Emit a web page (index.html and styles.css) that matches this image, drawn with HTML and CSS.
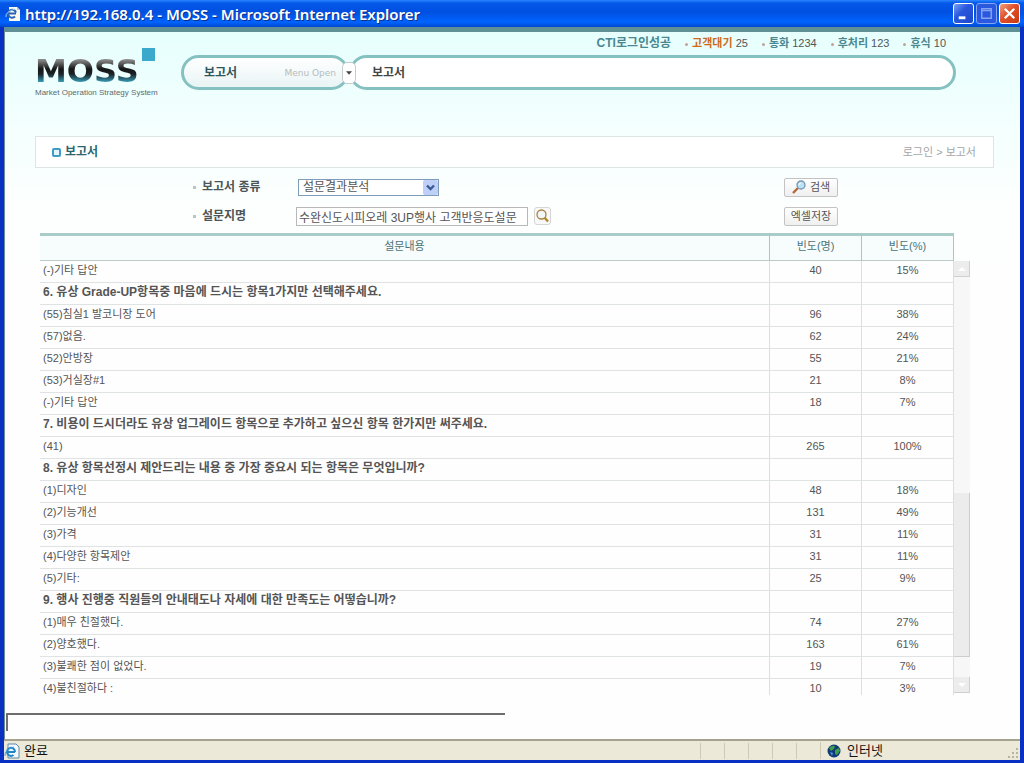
FILE: index.html
```html
<!DOCTYPE html>
<html lang="ko">
<head>
<meta charset="utf-8">
<title>MOSS</title>
<link rel="stylesheet" href="styles.css">
</head>
<body>
<div class="window">
  <header class="titlebar">
    <svg class="page-icon" viewBox="0 0 16 16" aria-hidden="true"><path d="M4 1h8l3 3v11H4z" fill="#fbfaf0"/><path d="M12 1v3h3z" fill="#b9c3d4"/><path d="M11 6.500a4 4 0 1 0-1 4M3.500 7.500H11" fill="none" stroke="#2a63b5" stroke-width="2"/><path d="M1 11Q0 6 10 3" fill="none" stroke="#9fd0f4"/></svg>
    <h1 class="window-title">http://192.168.0.4 - MOSS - Microsoft Internet Explorer</h1>
    <div class="window-buttons">
      <button class="win-btn" aria-label="최소화"><svg viewBox="0 0 20 20"><path d="M5 13h7v3H5z" fill="#fff"/></svg></button>
      <button class="win-btn win-btn-off" aria-label="최대화" disabled><svg viewBox="0 0 20 20"><path d="M5 5h10v10H5zM5 7h10" fill="none" stroke="#86a4f2" stroke-width="1.500"/></svg></button>
      <button class="win-btn win-btn-close" aria-label="닫기"><svg viewBox="0 0 20 20"><path d="M5 5l10 10M15 5l-10 10" stroke="#fff" stroke-width="2.400"/></svg></button>
    </div>
  </header>

  <main class="page">
    <div class="masthead">
      <a class="logo" href="#">
        <span class="logo-word">MOSS</span>
        <span class="logo-square"></span>
        <span class="logo-sub">Market Operation Strategy System</span>
      </a>
      <div class="masthead-main">
        <ul class="call-status">
          <li class="cti">CTI로그인성공</li>
          <li class="dot waiting"><b>고객대기</b> 25</li>
          <li class="dot"><b>통화</b> 1234</li>
          <li class="dot"><b>후처리</b> 123</li>
          <li class="dot"><b>휴식</b> 10</li>
        </ul>
        <nav class="nav">
          <div class="pill pill-menu"><b>보고서</b><span class="menu-open">Menu Open</span></div>
          <button class="menu-toggle" aria-label="Menu Open"><svg viewBox="0 0 7 4"><path d="M0 0h7L3.500 4z" fill="#444"/></svg></button>
          <div class="pill pill-path"><a href="#">보고서</a></div>
        </nav>
      </div>
    </div>

    <div class="section-bar">
      <h2 class="section-title">보고서</h2>
      <span class="breadcrumb">로그인 &gt; 보고서</span>
    </div>

    <form class="filters">
      <label class="filter-label" for="kind">보고서 종류</label>
      <div class="filter-field">
        <span class="select-box">
          <select id="kind"><option>설문결과분석</option></select>
          <svg class="select-arrow" viewBox="0 0 15 15" aria-hidden="true"><rect width="15" height="15" rx="2" fill="#bfd0f8"/><path d="M4 5.500l3.500 3.500L11 5.500" fill="none" stroke="#3b5a96" stroke-width="2.400"/></svg>
        </span>
      </div>
      <div><button class="btn" type="button"><svg class="btn-icon" viewBox="0 0 14 14" aria-hidden="true"><path d="M6 8l-5 5" stroke="#b5683c" stroke-width="2.400"/><circle cx="9" cy="5" r="4" fill="#b9e2f4" stroke="#7895b0" stroke-width="1.300"/><path d="M7 5q0-2 2-2" fill="none" stroke="#fff"/></svg>검색</button></div>
      <label class="filter-label" for="survey">설문지명</label>
      <div class="filter-field">
        <input id="survey" class="text-input" type="text" value="수완신도시피오레 3UP행사 고객반응도설문">
        <button class="find-btn" type="button" aria-label="찾기"><svg viewBox="0 0 15 16"><path d="M9 9l4 4.500" stroke="#b48628" stroke-width="2.400"/><circle cx="6.500" cy="6.500" r="4.500" fill="#f1f7f8" stroke="#a8843b" stroke-width="1.300"/></svg></button>
      </div>
      <div><button class="btn" type="button">엑셀저장</button></div>
    </form>

    <div class="results">
      <div class="table-clip">
        <table class="survey">
          <thead><tr><th>설문내용</th><th class="num">빈도(명)</th><th class="num">빈도(%)</th></tr></thead>
          <tbody>
            <tr><td>(-)기타 답안</td><td>40</td><td>15%</td></tr>
            <tr class="question"><td>6. 유상 Grade-UP항목중 마음에 드시는 항목1가지만 선택해주세요.</td><td></td><td></td></tr>
            <tr><td>(55)침실1 발코니장 도어</td><td>96</td><td>38%</td></tr>
            <tr><td>(57)없음.</td><td>62</td><td>24%</td></tr>
            <tr><td>(52)안방장</td><td>55</td><td>21%</td></tr>
            <tr><td>(53)거실장#1</td><td>21</td><td>8%</td></tr>
            <tr><td>(-)기타 답안</td><td>18</td><td>7%</td></tr>
            <tr class="question"><td>7. 비용이 드시더라도 유상 업그레이드 항목으로 추가하고 싶으신 항목 한가지만 써주세요.</td><td></td><td></td></tr>
            <tr><td>(41)</td><td>265</td><td>100%</td></tr>
            <tr class="question"><td>8. 유상 항목선정시 제안드리는 내용 중 가장 중요시 되는 항목은 무엇입니까?</td><td></td><td></td></tr>
            <tr><td>(1)디자인</td><td>48</td><td>18%</td></tr>
            <tr><td>(2)기능개선</td><td>131</td><td>49%</td></tr>
            <tr><td>(3)가격</td><td>31</td><td>11%</td></tr>
            <tr><td>(4)다양한 항목제안</td><td>31</td><td>11%</td></tr>
            <tr><td>(5)기타:</td><td>25</td><td>9%</td></tr>
            <tr class="question"><td>9. 행사 진행중 직원들의 안내태도나 자세에 대한 만족도는 어떻습니까?</td><td></td><td></td></tr>
            <tr><td>(1)매우 친절했다.</td><td>74</td><td>27%</td></tr>
            <tr><td>(2)양호했다.</td><td>163</td><td>61%</td></tr>
            <tr><td>(3)불쾌한 점이 없었다.</td><td>19</td><td>7%</td></tr>
            <tr><td>(4)불친절하다 :</td><td>10</td><td>3%</td></tr>
          </tbody>
        </table>
      </div>
      <div class="scrollbar">
        <button class="scroll-btn" aria-label="위로"><svg viewBox="0 0 8 4"><path d="M0 4h8L4 0z" fill="#fff"/></svg></button>
        <div class="scroll-track"><div class="scroll-thumb"></div></div>
        <button class="scroll-btn" aria-label="아래로"><svg viewBox="0 0 8 4"><path d="M0 0h8L4 4z" fill="#fff"/></svg></button>
      </div>
    </div>
    <div class="frame-box"></div>
  </main>

  <footer class="statusbar">
    <svg class="status-icon" viewBox="0 0 16 16" aria-hidden="true"><path d="M4 1h8l3 3v11H4z" fill="#f4f8fc" stroke="#5d87a8"/><path d="M11 9a4 4 0 1 0-1.500 3M3.500 9H11" fill="none" stroke="#1f86c8" stroke-width="2"/><path d="M1 13Q0 7 10 4" fill="none" stroke="#3ba0dc"/></svg>
    <span class="status-text">완료</span>
    <div class="cells"><i></i><i></i><i></i><i></i><i></i></div>
    <div class="zone">
      <svg class="zone-icon" viewBox="0 0 14 14" aria-hidden="true"><circle cx="7" cy="7" r="6.500" fill="#123a78"/><path d="M2 4q3-3 6-2L7 5 4 7zM8 6l4-2 1 3-3 4-2-1z" fill="#3e9e4e"/><path d="M3 8l3 1-1 3z" fill="#4d9be0"/></svg>
      인터넷
      <svg class="grip" viewBox="0 0 12 12" aria-hidden="true"><path d="M9 1h2v2H9zM5 5h2v2H5zM9 5h2v2H9zM1 9h2v2H1zM5 9h2v2H5zM9 9h2v2H9z" fill="#b8b4a0"/></svg>
    </div>
  </footer>
</div>
</body>
</html>
```
FILE: styles.css
```css
*, *::before { box-sizing: border-box; }

body {
  margin: 0;
  font: 12px/16px "Liberation Sans", "Noto Sans CJK KR", sans-serif;
  color: #555;
  background: #0a3bd0;
}

button, input, select { font: inherit; color: inherit; }
button { padding: 0; }
svg { display: block; }

.window {
  display: flex;
  flex-direction: column;
  height: 100vh;
  border: solid #0831c4;
  border-width: 0 4px 3px;
}

/* Title bar */
.titlebar {
  display: flex;
  align-items: center;
  flex: none;
  height: 27px;
  margin: 0 -4px;
  padding: 0 4px 0 5px;
  background: linear-gradient(#2a86ff 0, #0458e8 3px, #0050e0 12px, #0064ff 22px, #0048d0 100%);
}
.page-icon { width: 16px; height: 16px; }
.window-title {
  flex: 1;
  margin: 0 0 0 4px;
  font: 600 15px/18px "Noto Sans", "Noto Sans CJK KR", sans-serif;
  color: #fff;
  text-shadow: 1px 1px 0 #0a2f8c;
}
.window-buttons { display: flex; gap: 2px; }
.win-btn {
  width: 21px;
  height: 21px;
  border: 1px solid #fff;
  border-radius: 3px;
  background: linear-gradient(135deg, #7aa0f6, #2a58de 40%, #1c48c8);
}
.win-btn-off { border-color: #86a4f2; background: #2a58de; }
.win-btn-close { background: linear-gradient(135deg, #f0a080, #e0502a 45%, #c83a14); }

/* Page */
.page {
  display: flex;
  flex-direction: column;
  flex: 1;
  min-height: 0;
  border-top: 5px solid #5f9096;
  border-left: 1px solid #6c8c94;
  padding: 0 26px 0 30px;
  background: linear-gradient(#e6fffd, #f3fffe 90px, #fdfffe 180px, #fefefe 240px);
}

.masthead {
  display: flex;
  flex: none;
  gap: 26px;
  height: 104px;
  padding-right: 38px;
}
.logo {
  position: relative;
  flex: none;
  width: 120px;
  padding-top: 22px;
  color: #5b6b70;
  text-decoration: none;
}
.logo-word {
  display: block;
  font: bold 32px/34px "DejaVu Sans", sans-serif;
  color: transparent;
  background: linear-gradient(#888 6px, #161616 15px, #1c2226 20px, #3cabc8 29px);
  background-clip: text;
  -webkit-background-clip: text;
}
.logo-square {
  position: absolute;
  top: 16px;
  right: 0;
  width: 13px;
  height: 13px;
  background: #3ba9cb;
}
.logo-sub { display: block; font-size: 8px; line-height: 10px; white-space: nowrap; }

.masthead-main { flex: 1; }
.call-status {
  display: flex;
  justify-content: flex-end;
  gap: 14px;
  margin: 0;
  padding: 3px 10px 4px 0;
  list-style: none;
  font-size: 11px;
}
.call-status b { color: #4a8790; }
.call-status .cti { font-size: 12px; font-weight: bold; color: #4a8790; }
.call-status .waiting b { color: #cc6a1c; }
.dot::before {
  content: "";
  display: inline-block;
  width: 3px;
  height: 3px;
  margin-right: 4px;
  border-radius: 50%;
  background: #c0a494;
  vertical-align: middle;
}

.nav { display: flex; align-items: center; }
.pill {
  display: flex;
  align-items: center;
  height: 35px;
  border: 3px solid #85c1c1;
  border-radius: 18px;
  background: #fff;
}
.pill-menu {
  flex: none;
  justify-content: space-between;
  width: 168px;
  padding: 0 10px 0 20px;
  background: linear-gradient(#fff, #e9f4f5);
  color: #2f5660;
}
.menu-open { font: 9px/16px "DejaVu Sans", sans-serif; color: #b5bcbe; }
.pill-path { flex: 1; padding-left: 20px; }
.pill-path a { font-weight: bold; color: #444; text-decoration: none; }
.menu-toggle {
  z-index: 1;
  display: flex;
  align-items: center;
  justify-content: center;
  width: 14px;
  height: 22px;
  margin: 0 -7px;
  border: 1px solid #c4cccc;
  border-radius: 5px;
  background: #fff;
}
.menu-toggle svg { width: 6px; height: 4px; }

.section-bar {
  display: flex;
  align-items: center;
  justify-content: space-between;
  flex: none;
  height: 32px;
  padding: 0 17px 0 16px;
  border: 1px solid #dfe5e4;
  background: #fff;
}
.section-title {
  display: flex;
  align-items: center;
  gap: 4px;
  margin: 0;
  font-size: 12px;
  color: #2c666f;
}
.section-title::before {
  content: "";
  width: 9px;
  height: 9px;
  border: 2px solid #3d9dc2;
  border-radius: 2px;
  background: #e4f6fb;
}
.breadcrumb { font-size: 11px; color: #a5a5a5; }

/* Search form */
.filters {
  display: grid;
  grid-template-columns: 261px 1fr 210px;
  grid-auto-rows: 20px;
  row-gap: 9px;
  align-items: center;
  flex: none;
  padding: 9px 0 7px;
}
.filter-label { padding-left: 158px; font-weight: bold; color: #4c5558; }
.filter-label::before {
  content: "";
  display: inline-block;
  width: 3px;
  height: 3px;
  margin-right: 6px;
  background: #b9c4c4;
  vertical-align: middle;
}
.filter-field { display: flex; align-items: center; gap: 6px; }
.select-box { position: relative; width: 141px; margin-left: 2px; }
.select-box select {
  appearance: none;
  display: block;
  width: 100%;
  height: 17px;
  padding: 0 18px 0 4px;
  border: 1px solid #7f9db9;
  border-radius: 0;
  background: #fff;
  font-size: 12px;
  line-height: 15px;
}
.select-arrow {
  position: absolute;
  top: 1px;
  right: 1px;
  width: 15px;
  height: 15px;
  pointer-events: none;
}
.text-input {
  width: 232px;
  height: 19px;
  padding: 0 2px;
  border: 1px solid #b8b8b8;
  background: #fff;
  font-size: 12px;
}
.find-btn {
  width: 17px;
  height: 18px;
  border: 1px solid #d5d5d5;
  border-radius: 3px;
  background: #f8f8f8;
}
.btn {
  display: flex;
  align-items: center;
  justify-content: center;
  gap: 4px;
  width: 54px;
  height: 19px;
  border: 1px solid #c3c3c3;
  border-radius: 2px;
  background: linear-gradient(#fff, #efefef);
  font-size: 11px;
  white-space: nowrap;
}
.btn-icon { width: 14px; height: 14px; }

/* Results */
.results {
  display: flex;
  flex: 1;
  min-height: 0;
  margin: 0 24px 18px 5px;
}
.table-clip { flex: 1; overflow: hidden; }
.survey {
  width: 100%;
  border-collapse: separate;
  border-spacing: 0;
  table-layout: fixed;
}
.survey th {
  height: 28px;
  padding: 0 0 4px;
  border-top: 3px solid #a9ccc8;
  border-right: 1px solid #aec4c4;
  border-bottom: 1px solid #bccaca;
  background: #f7fcfc;
  font-size: 11px;
  font-weight: normal;
  color: #4c7478;
}
.survey .num { width: 92px; }
.survey td {
  height: 22px;
  padding: 0 0 3px;
  border-right: 1px solid #dcdfdf;
  border-bottom: 1px solid #e0e3e3;
  font-size: 11px;
  text-align: center;
  white-space: nowrap;
}
.survey td:first-child { padding-left: 3px; text-align: left; }
.survey .question td { font-size: 12px; font-weight: bold; }

.scrollbar {
  display: flex;
  flex-direction: column;
  flex: none;
  width: 16px;
  padding-top: 28px;
  padding-bottom: 2px;
}
.scroll-btn {
  display: flex;
  align-items: center;
  justify-content: center;
  height: 16px;
  border: solid #cfcfcf;
  border-width: 0 1px 1px 0;
  background: #ececec;
}
.scroll-btn svg { width: 8px; height: 4px; }
.scroll-track { display: flex; flex: 1; align-items: flex-end; background: #f7f7f7; }
.scroll-thumb {
  width: 100%;
  height: 41%;
  margin-bottom: 20px;
  border: solid #cdcdcd;
  border-width: 0 1px 1px 0;
  background: #ececec;
}

.frame-box {
  flex: none;
  width: 52%;
  height: 18px;
  margin: 0 0 8px -29px;
  border: solid #6e6e6e;
  border-width: 2px 0 0 2px;
}

/* Status bar */
.statusbar {
  display: flex;
  align-items: center;
  flex: none;
  height: 21px;
  border-top: 2px solid #a5a28f;
  background: #ece9d8;
  font-size: 13px;
  color: #111;
}
.status-icon { width: 16px; height: 16px; }
.status-text { flex: 1; padding-left: 4px; }
.cells { display: flex; }
.cells i { width: 24px; height: 16px; border-left: 1px solid #cdc9b5; }
.zone {
  display: flex;
  align-items: center;
  gap: 6px;
  width: 200px;
  height: 17px;
  padding-left: 6px;
  border-left: 1px solid #cdc9b5;
}
.zone-icon { width: 14px; height: 14px; }
.grip { width: 12px; height: 12px; margin: 4px 1px 0 auto; }
```
